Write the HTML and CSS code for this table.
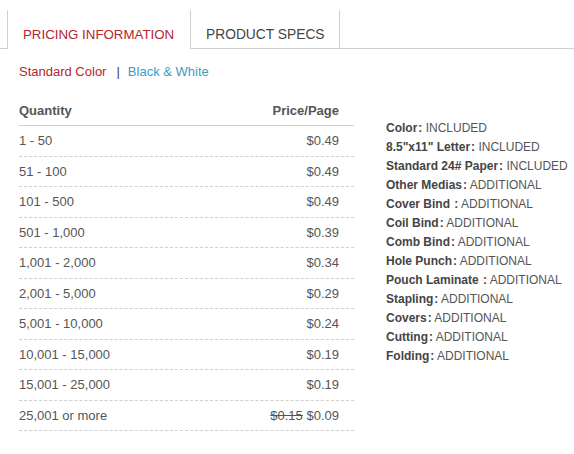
FILE: index.html
```html
<!DOCTYPE html>
<html>
<head>
<meta charset="utf-8">
<link rel="stylesheet" href="styles.css">
</head>
<body>
<div class="tabs">
  <div class="tab active">PRICING INFORMATION</div>
  <div class="tab specs-tab">PRODUCT SPECS</div>
</div>
<div class="content">
  <div class="toggle">
    <span class="std">Standard Color</span>
    <span class="sep">|</span>
    <span class="bw">Black &amp; White</span>
  </div>
  <div class="main">
    <div class="table">
      <div class="row head"><span>Quantity</span><span>Price/Page</span></div>
      <div class="row"><span>1 - 50</span><span>$0.49</span></div>
      <div class="row"><span>51 - 100</span><span>$0.49</span></div>
      <div class="row"><span>101 - 500</span><span>$0.49</span></div>
      <div class="row"><span>501 - 1,000</span><span>$0.39</span></div>
      <div class="row"><span>1,001 - 2,000</span><span>$0.34</span></div>
      <div class="row"><span>2,001 - 5,000</span><span>$0.29</span></div>
      <div class="row"><span>5,001 - 10,000</span><span>$0.24</span></div>
      <div class="row"><span>10,001 - 15,000</span><span>$0.19</span></div>
      <div class="row"><span>15,001 - 25,000</span><span>$0.19</span></div>
      <div class="row"><span>25,001 or more</span><span><s class="old">$0.15</s> $0.09</span></div>
    </div>
    <ul class="specs">
      <li><b>Color<span class="c">:</span></b> INCLUDED</li>
      <li><b>8.5"x11" Letter<span class="c">:</span></b> INCLUDED</li>
      <li><b>Standard 24# Paper<span class="c">:</span></b> INCLUDED</li>
      <li><b>Other Medias<span class="c">:</span></b> ADDITIONAL</li>
      <li><b>Cover Bind <span class="c">:</span></b> ADDITIONAL</li>
      <li><b>Coil Bind<span class="c">:</span></b> ADDITIONAL</li>
      <li><b>Comb Bind<span class="c">:</span></b> ADDITIONAL</li>
      <li><b>Hole Punch<span class="c">:</span></b> ADDITIONAL</li>
      <li><b>Pouch Laminate <span class="c">:</span></b> ADDITIONAL</li>
      <li><b>Stapling<span class="c">:</span></b> ADDITIONAL</li>
      <li><b>Covers<span class="c">:</span></b> ADDITIONAL</li>
      <li><b>Cutting<span class="c">:</span></b> ADDITIONAL</li>
      <li><b>Folding<span class="c">:</span></b> ADDITIONAL</li>
    </ul>
  </div>
</div>
</body>
</html>
```

FILE: styles.css
```css
html, body {
  margin: 0;
  padding: 0;
  background: #fff;
  font-family: "Liberation Sans", Arial, sans-serif;
  color: #555;
}
.tabs {
  display: flex;
  padding-top: 10px;
  padding-left: 7px;
  border-bottom: 1px solid #d0d0d0;
  height: 38px;
}
.tab {
  box-sizing: border-box;
  height: 39px;
  padding: 16px 15px 0 15px;
  font-size: 13.3px;
  color: #444;
  border-left: 1px solid #d0d0d0;
  background: #fff;
  line-height: 17px;
  white-space: nowrap;
}
.tab.active {
  width: 183px;
  color: #b5252b;
}
.tab.specs-tab {
  width: 150px;
  height: 38px;
  font-size: 13.8px;
  border-right: 1px solid #d0d0d0;
}
.content {
  padding-left: 19px;
}
.toggle {
  margin-top: 13px;
  line-height: 20px;
  font-size: 13px;
  display: flex;
}
.std { color: #b5252b; }
.sep { color: #444; margin: 0 8px 0 10px; }
.bw { color: #3a9dc0; }
.main {
  display: flex;
  margin-top: 13px;
  align-items: flex-start;
}
.table {
  width: 335px;
  flex: none;
}
.row {
  box-sizing: border-box;
  height: 30.5px;
  display: flex;
  justify-content: space-between;
  align-items: center;
  padding-right: 15px;
  font-size: 13px;
  color: #555;
  border-bottom: 1px dashed #cfcfcf;
}
.row.head {
  height: 31px;
  font-weight: bold;
  color: #555;
  border-bottom: 1px solid #cfcfcf;
}
.old {
  color: #555;
}
.specs {
  list-style: none;
  margin: 24px 0 0 32px;
  padding: 0;
  font-size: 12px;
  line-height: 19px;
  color: #555;
}
.specs b {
  color: #444;
}
.specs .c {
  margin-left: 1px;
}
```
